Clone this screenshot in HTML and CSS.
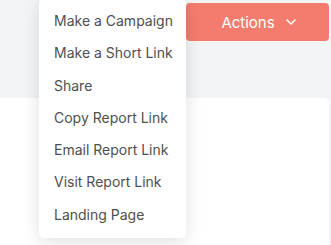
FILE: index.html
```html
<!DOCTYPE html>
<html lang="en">
<head>
    <meta charset="UTF-8">
    <meta name="viewport" content="width=device-width, initial-scale=1.0">
    <title>Report actions</title>
    <link rel="stylesheet" href="styles.css">
</head>
<body>
    <div class="page">
        <div class="toolbar">
            <button type="button" class="actions-btn">
                Actions
                <svg class="chevron" width="10" height="6" viewBox="0 0 10 6">
                    <path d="M1 1l4 4 4-4" fill="none" stroke="#fff" stroke-width="1.6" stroke-linecap="round" stroke-linejoin="round"/>
                </svg>
            </button>
        </div>
        <div class="card"></div>

        <ul class="menu">
            <li>Make a Campaign</li>
            <li>Make a Short Link</li>
            <li>Share</li>
            <li>Copy Report Link</li>
            <li>Email Report Link</li>
            <li>Visit Report Link</li>
            <li>Landing Page</li>
        </ul>
    </div>
</body>
</html>
```

FILE: styles.css
```css
body {
    margin: 0;
    background-color: #f3f4f6;
    font-family: 'Inter', 'Liberation Sans', sans-serif;
    overflow: hidden;
}

.page {
    position: relative;
    height: 245px;
    overflow: hidden;
}

.toolbar {
    display: flex;
    justify-content: flex-end;
    padding: 3px 2px 0 0;
}

.actions-btn {
    display: flex;
    align-items: center;
    justify-content: center;
    gap: 11px;
    width: 143px;
    height: 38px;
    padding: 0 0 0 2px;
    background-color: #f47c6e;
    color: #fff;
    border: none;
    border-radius: 4px;
    font-family: inherit;
    font-size: 15px;
    cursor: pointer;
}

.card {
    margin: 57px 2px 0 0;
    height: 147px;
    background-color: #fff;
    border-radius: 0 5px 0 0;
}

.menu {
    position: absolute;
    top: -2px;
    left: 39px;
    width: 147px;
    margin: 0;
    padding: 7px 0;
    list-style: none;
    background-color: #fff;
    border-radius: 5px;
    box-shadow: 0 4px 18px rgba(0, 0, 0, 0.12);
}

.menu li {
    padding: 6px 0 6px 15px;
    line-height: 20.3px;
    font-size: 14px;
    color: #4f4f4f;
    white-space: nowrap;
}
```
